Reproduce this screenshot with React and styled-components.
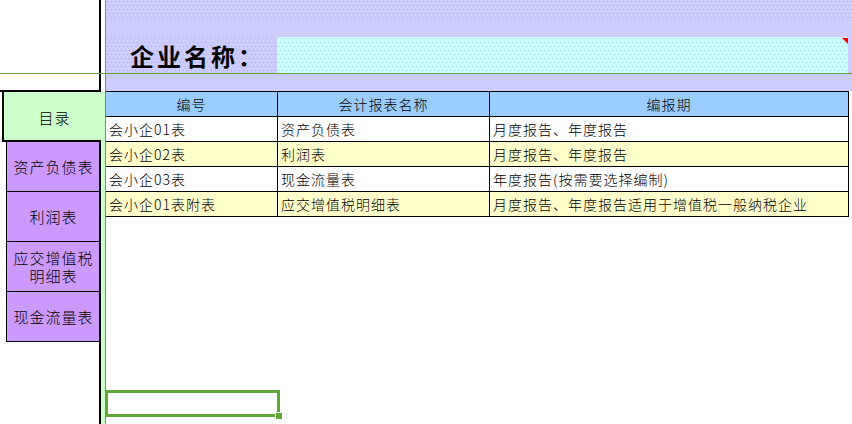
import React from "react";
import styled, { createGlobalStyle, css } from "styled-components";

const Global = createGlobalStyle`
  html, body { margin: 0; padding: 0; background: #fff; }
  body { font-family: "Noto Sans CJK SC", "Noto Sans", sans-serif; }
`;

const GREEN = "#64a23c";
const LAVENDER = "#ccccff";
const CYAN = "#ccffff";

const dotted = (bg, dot) => css`
  background-color: ${bg};
  background-image:
    conic-gradient(from 0deg at 1px 1px, transparent 75%, ${dot} 0),
    conic-gradient(from 0deg at 1px 1px, transparent 75%, ${dot} 0);
  background-size: 4px 8px, 4px 8px;
  background-position: 1px 1px, 3px 5px;
`;

const Root = styled.div`
  position: relative;
  display: flex;
  width: 852px;
  height: 424px;
  overflow: hidden;
  background: #fff;
  font-family: "Noto Sans CJK SC", sans-serif;
  font-weight: 300;
  color: #000;
`;

const Left = styled.div`
  flex: none;
  width: 105px;
  display: flex;
  flex-direction: column;
  background: #fff;
`;

const Corner = styled.div`
  width: 101px;
  height: 92px;
  box-sizing: border-box;
  border-right: 2px solid #000;
  border-bottom: 2px solid #000;
`;

const ActiveTab = styled.div`
  margin-left: 2px;
  width: 103px;
  height: 48px;
  box-sizing: border-box;
  border-left: 2px solid #000;
  background: #ccffcc;
  display: flex;
  align-items: center;
  justify-content: center;
  font-size: 15px;
  letter-spacing: 1px;
  padding-top: 2px;
`;

const Lower = styled.div`
  flex: 1;
  display: flex;
`;

const TabColumn = styled.div`
  margin-left: 2px;
  width: 99px;
  box-sizing: border-box;
  border-top: 2px solid #000;
  border-right: 2px solid #000;
  padding-left: 4px;
  display: flex;
  flex-direction: column;
`;

const Strip = styled.div`
  width: 4px;
  background: #ccffcc;
`;

const Tab = styled.div`
  height: 50px;
  box-sizing: border-box;
  border-left: 1px solid #000;
  border-bottom: 1px solid #000;
  background: #cc99ff;
  display: flex;
  align-items: center;
  justify-content: center;
  text-align: center;
  font-size: 15px;
  letter-spacing: 1px;
  line-height: 18px;
  padding: 0 2px 0 3px;
`;

const Sheet = styled.div`
  position: relative;
  flex: 1;
  border-left: 1px solid ${GREEN};
  display: flex;
  flex-direction: column;
`;

const Band = styled.div`
  height: ${(p) => p.$h}px;
  ${(p) => (p.$dots ? dotted(LAVENDER, "#8fb4ff") : css`background: ${LAVENDER};`)}
`;

const NameRow = styled.div`
  height: 36px;
  display: flex;
  background: ${LAVENDER};
`;

const NameLabel = styled.div`
  width: 171px;
  box-sizing: border-box;
  padding-left: 24px;
  display: flex;
  align-items: center;
  font-size: 24px;
  font-weight: 700;
  letter-spacing: 3px;
  white-space: nowrap;
  ${dotted(LAVENDER, "#8fb4ff")}
`;

const NameInput = styled.div`
  position: relative;
  width: 571px;
  ${dotted(CYAN, "#99c8ff")}
`;

const Comment = styled.span`
  position: absolute;
  top: 1px;
  right: 0;
  width: 0;
  height: 0;
  border-top: 6px solid #ff0000;
  border-left: 6px solid transparent;
`;

const Table = styled.div`
  display: grid;
  grid-template-columns: 172px 212px 359px;
  width: 743px;
  border-top: 1px solid #000;
`;

const Cell = styled.div`
  height: 25px;
  box-sizing: border-box;
  border-right: 1px solid #000;
  border-bottom: 1px solid #000;
  display: flex;
  align-items: center;
  font-size: 14px;
  letter-spacing: 1px;
  white-space: nowrap;
  overflow: hidden;
  background: ${(p) => p.$bg};
  justify-content: ${(p) => (p.$head ? "center" : "flex-start")};
  padding-left: ${(p) => (p.$head ? "0" : "3px")};
`;

const FrozenLine = styled.div`
  position: absolute;
  left: 0;
  right: 0;
  top: 73px;
  height: 1px;
  background: ${GREEN};
`;

const Selection = styled.div`
  position: absolute;
  left: -1px;
  top: 390px;
  width: 175px;
  height: 27px;
  box-sizing: border-box;
  border: 3px solid #5fa836;
`;

const Handle = styled.span`
  position: absolute;
  right: -5px;
  bottom: -5px;
  width: 6px;
  height: 6px;
  background: #5fa836;
  border-left: 1px solid #fff;
  border-top: 1px solid #fff;
`;

const rows = [
  ["会小企01表", "资产负债表", "月度报告、年度报告"],
  ["会小企02表", "利润表", "月度报告、年度报告"],
  ["会小企03表", "现金流量表", "年度报告(按需要选择编制)"],
  ["会小企01表附表", "应交增值税明细表", "月度报告、年度报告适用于增值税一般纳税企业"],
];

const tabs = ["资产负债表", "利润表", "应交增值税明细表", "现金流量表"];

export default function App() {
  return (
    <>
      <Global />
      <Root>
        <Left>
          <Corner />
          <ActiveTab>目录</ActiveTab>
          <Lower>
            <TabColumn>
              {tabs.map((t) => (
                <Tab key={t}>{t}</Tab>
              ))}
            </TabColumn>
            <Strip />
          </Lower>
        </Left>
        <Sheet>
          <Band $h={18} $dots />
          <Band $h={19} />
          <NameRow>
            <NameLabel>企业名称：</NameLabel>
            <NameInput>
              <Comment />
            </NameInput>
          </NameRow>
          <Band $h={18} />
          <Table>
            {["编号", "会计报表名称", "编报期"].map((h) => (
              <Cell key={h} $head $bg="#99ccff">
                {h}
              </Cell>
            ))}
            {rows.map((r, i) =>
              r.map((c, j) => (
                <Cell key={`${i}-${j}`} $bg={i % 2 ? "#ffffcc" : "#ffffff"}>
                  {c}
                </Cell>
              ))
            )}
          </Table>
          <Selection>
            <Handle />
          </Selection>
        </Sheet>
        <FrozenLine />
      </Root>
    </>
  );
}
